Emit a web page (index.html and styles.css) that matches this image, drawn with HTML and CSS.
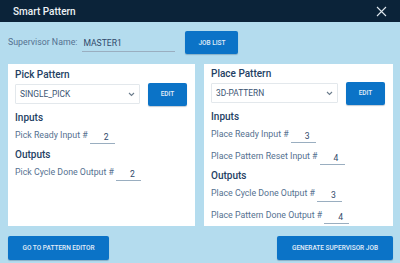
FILE: index.html
```html
<!DOCTYPE html>
<html>
<head>
<meta charset="utf-8">
<link rel="stylesheet" href="styles.css">
</head>
<body>
<div class="dialog">
  <header class="titlebar">
    <span class="title">Smart Pattern</span>
    <svg class="close" width="11" height="11" viewBox="0 0 11 11"><path d="M1 1 L10 10 M10 1 L1 10" stroke="#dfe7ee" stroke-width="1.1" fill="none"/></svg>
  </header>
  <div class="content">
    <div class="toolbar">
      <span class="label sup-label">Supervisor Name:</span>
      <span class="field sup-field">MASTER1</span>
      <button class="btn joblist">JOB LIST</button>
    </div>
    <div class="panels">
      <section class="panel">
        <h2 class="heading">Pick Pattern</h2>
        <div class="select-row">
          <div class="select"><span>SINGLE_PICK</span><svg width="7" height="5" viewBox="0 0 7 5"><path d="M1 1 L3.5 3.5 L6 1" stroke="#6b7c8c" stroke-width="1.1" fill="none"/></svg></div>
          <button class="btn edit">EDIT</button>
        </div>
        <h2 class="heading sub">Inputs</h2>
        <div class="io-row"><span class="label">Pick Ready Input #</span><span class="field num">2</span></div>
        <h2 class="heading sub2">Outputs</h2>
        <div class="io-row"><span class="label">Pick Cycle Done Output #</span><span class="field num">2</span></div>
      </section>
      <section class="panel panel-tight">
        <h2 class="heading">Place Pattern</h2>
        <div class="select-row">
          <div class="select"><span>3D-PATTERN</span><svg width="7" height="5" viewBox="0 0 7 5"><path d="M1 1 L3.5 3.5 L6 1" stroke="#6b7c8c" stroke-width="1.1" fill="none"/></svg></div>
          <button class="btn edit">EDIT</button>
        </div>
        <h2 class="heading sub">Inputs</h2>
        <div class="io-row"><span class="label">Place Ready Input #</span><span class="field num">3</span></div>
        <div class="io-row"><span class="label">Place Pattern Reset Input #</span><span class="field num">4</span></div>
        <h2 class="heading sub2">Outputs</h2>
        <div class="io-row"><span class="label">Place Cycle Done Output #</span><span class="field num">3</span></div>
        <div class="io-row"><span class="label">Place Pattern Done Output #</span><span class="field num">4</span></div>
      </section>
    </div>
    <div class="footer">
      <button class="btn wide-left">GO TO PATTERN EDITOR</button>
      <button class="btn wide-right">GENERATE SUPERVISOR JOB</button>
    </div>
  </div>
</div>
</body>
</html>
```

FILE: styles.css
```css
* { box-sizing: border-box; }
html, body {
  margin: 0;
  padding: 0;
  width: 400px;
  height: 263px;
  overflow: hidden;
  font-family: Roboto, "Liberation Sans", sans-serif;
}
.dialog {
  width: 400px;
  height: 263px;
  display: flex;
  flex-direction: column;
  background: #b4dcee;
}
.titlebar {
  height: 22px;
  flex: none;
  background: #0b2339;
  display: flex;
  align-items: center;
  justify-content: space-between;
  padding: 0 13px 0 13px;
}
.title {
  color: #eef2f6;
  font-size: 10px;
  font-weight: 500;
}
.close { display: block; margin-top: 1px; }
.content {
  flex: 1;
  display: flex;
  flex-direction: column;
  padding: 9px 7px 4px 8px;
  gap: 10px;
}
.toolbar {
  height: 23px;
  flex: none;
  display: flex;
  align-items: center;
}
.label {
  font-size: 8.8px;
  color: #557190;
  white-space: nowrap;
}
.sup-label { margin-top: -1px; }
.field {
  display: block;
  border-bottom: 1px solid #9aaec0;
  font-size: 8.6px;
  color: #30496a;
}
.sup-field {
  width: 93px;
  height: 19px;
  margin-left: 5px;
  padding: 5px 0 0 1px;
}
.btn {
  border: none;
  border-radius: 2px;
  background: #0b73c7;
  color: #e3eef8;
  font-family: Roboto, "Liberation Sans", sans-serif;
  font-size: 6.5px;
  font-weight: 500;
  padding: 0;
  box-shadow: 0 1px 1px rgba(0, 40, 80, 0.25);
  display: flex;
  align-items: center;
  justify-content: center;
}
.joblist {
  width: 53px;
  height: 23px;
  margin-left: 10px;
}
.panels {
  flex: 1;
  display: grid;
  grid-template-columns: 187px 189px;
  gap: 9px;
}
.panel {
  background: #ffffff;
  padding: 5px 8px 0 7px;
  display: flex;
  flex-direction: column;
}
.panel-tight { padding-top: 4px; }
.heading {
  margin: 0;
  font-size: 10px;
  font-weight: 500;
  line-height: 12px;
  color: #243f64;
}
.select-row {
  display: flex;
  align-items: center;
  height: 24px;
  margin-top: 1px;
}
.select {
  flex: 1;
  height: 20px;
  border: 1px solid #e3e8ec;
  border-radius: 1px;
  display: flex;
  align-items: center;
  justify-content: space-between;
  padding: 0 4px 0 4px;
  font-size: 8.4px;
  color: #3c5573;
}
.edit {
  width: 39px;
  height: 23px;
  margin-left: 8px;
}
.sub { margin-top: 6px; }
.sub2 { margin-top: 3px; }
.io-row {
  display: flex;
  align-items: center;
  height: 22px;
}
.num {
  width: 25px;
  height: 18px;
  margin-left: 2px;
  padding: 6px 0 0 8px;
  text-align: center;
}
.footer {
  height: 24px;
  flex: none;
  display: flex;
  justify-content: space-between;
}
.wide-left { width: 101px; height: 24px; }
.wide-right { width: 116px; height: 24px; }
```
